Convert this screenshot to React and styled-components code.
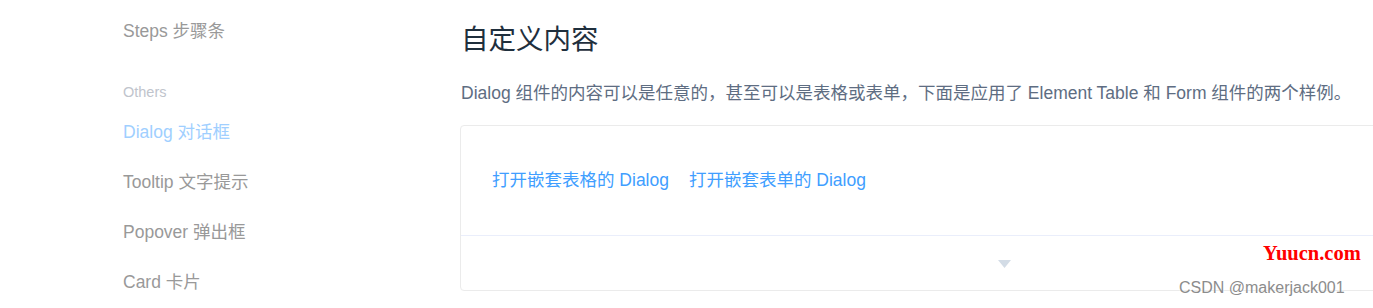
import React from "react";
import styled, { createGlobalStyle } from "styled-components";

const Global = createGlobalStyle`
  html, body { margin: 0; padding: 0; background: #fff; overflow: hidden; }
  body { font-family: "Liberation Sans", Arial, "Noto Sans CJK SC", sans-serif; }
`;

const Page = styled.div`
  position: relative;
  display: flex;
  width: 1373px;
  height: 308px;
  overflow: hidden;
`;

const Sidebar = styled.nav`
  flex: 0 0 460px;
  box-sizing: border-box;
  padding: 6px 0 0 123px;
  display: flex;
  flex-direction: column;
`;

const NavItem = styled.a`
  display: block;
  height: 50px;
  line-height: 50px;
  font-size: 17.5px;
  color: ${(p) => (p.$active ? "#a0cfff" : "#999")};
  text-decoration: none;
  white-space: nowrap;
`;

const GroupTitle = styled.div`
  margin-top: 21px;
  height: 30px;
  line-height: 30px;
  font-size: 14.5px;
  color: #c0c4cc;
`;

const Main = styled.main`
  flex: 0 0 1088px;
  display: flex;
  flex-direction: column;
`;

const Heading = styled.h3`
  margin: 20px 0 0 1px;
  height: 40px;
  line-height: 40px;
  font-size: 27.5px;
  font-weight: 400;
  color: #1f2f3d;
  white-space: nowrap;
`;

const Desc = styled.p`
  margin: 20px 0 19px 1px;
  height: 26px;
  line-height: 26px;
  font-size: 17.5px;
  color: #5e6d82;
  white-space: nowrap;
`;

const Card = styled.div`
  border: 1px solid #ebebeb;
  border-radius: 4px;
  height: 166px;
  box-sizing: border-box;
  display: flex;
  flex-direction: column;
`;

const Demo = styled.div`
  height: 110px;
  box-sizing: border-box;
  padding: 30px 31px;
  display: flex;
  align-items: center;
  gap: 20px;
  border-bottom: 1px solid #eaeefb;
`;

const TextButton = styled.button`
  border: 0;
  background: none;
  padding: 0;
  font-family: inherit;
  font-size: 17.5px;
  line-height: 49px;
  color: #409eff;
  cursor: pointer;
  white-space: nowrap;
`;

const Meta = styled.div`
  flex: 1;
  display: flex;
  align-items: center;
  justify-content: center;
`;

const Caret = styled.svg`
  width: 13px;
  height: 8px;
  margin-top: 1px;
`;

const MarkRed = styled.div`
  position: absolute;
  left: 1263px;
  top: 241px;
  font-family: "Liberation Serif", "Times New Roman", serif;
  font-weight: 700;
  font-size: 20.5px;
  line-height: 24px;
  color: #ff0000;
  white-space: nowrap;
`;

const MarkGray = styled.div`
  position: absolute;
  left: 1179px;
  top: 278px;
  font-family: "Liberation Sans", Arial, sans-serif;
  font-size: 16px;
  line-height: 20px;
  color: #8c8c8c;
  white-space: nowrap;
  text-shadow: 0 0 2px #fff;
`;

export default function App() {
  return (
    <>
      <Global />
      <Page>
        <Sidebar>
          <NavItem>Steps 步骤条</NavItem>
          <GroupTitle>Others</GroupTitle>
          <NavItem $active>Dialog 对话框</NavItem>
          <NavItem>Tooltip 文字提示</NavItem>
          <NavItem>Popover 弹出框</NavItem>
          <NavItem>Card 卡片</NavItem>
        </Sidebar>
        <Main>
          <Heading>自定义内容</Heading>
          <Desc>
            Dialog 组件的内容可以是任意的，甚至可以是表格或表单，下面是应用了 Element Table 和 Form 组件的两个样例。
          </Desc>
          <Card>
            <Demo>
              <TextButton>打开嵌套表格的 Dialog</TextButton>
              <TextButton>打开嵌套表单的 Dialog</TextButton>
            </Demo>
            <Meta>
              <Caret viewBox="0 0 13 8">
                <path d="M0 0 L13 0 L6.5 8 Z" fill="#d3dce6" />
              </Caret>
            </Meta>
          </Card>
        </Main>
        <MarkRed>Yuucn.com</MarkRed>
        <MarkGray>CSDN @makerjack001</MarkGray>
      </Page>
    </>
  );
}
